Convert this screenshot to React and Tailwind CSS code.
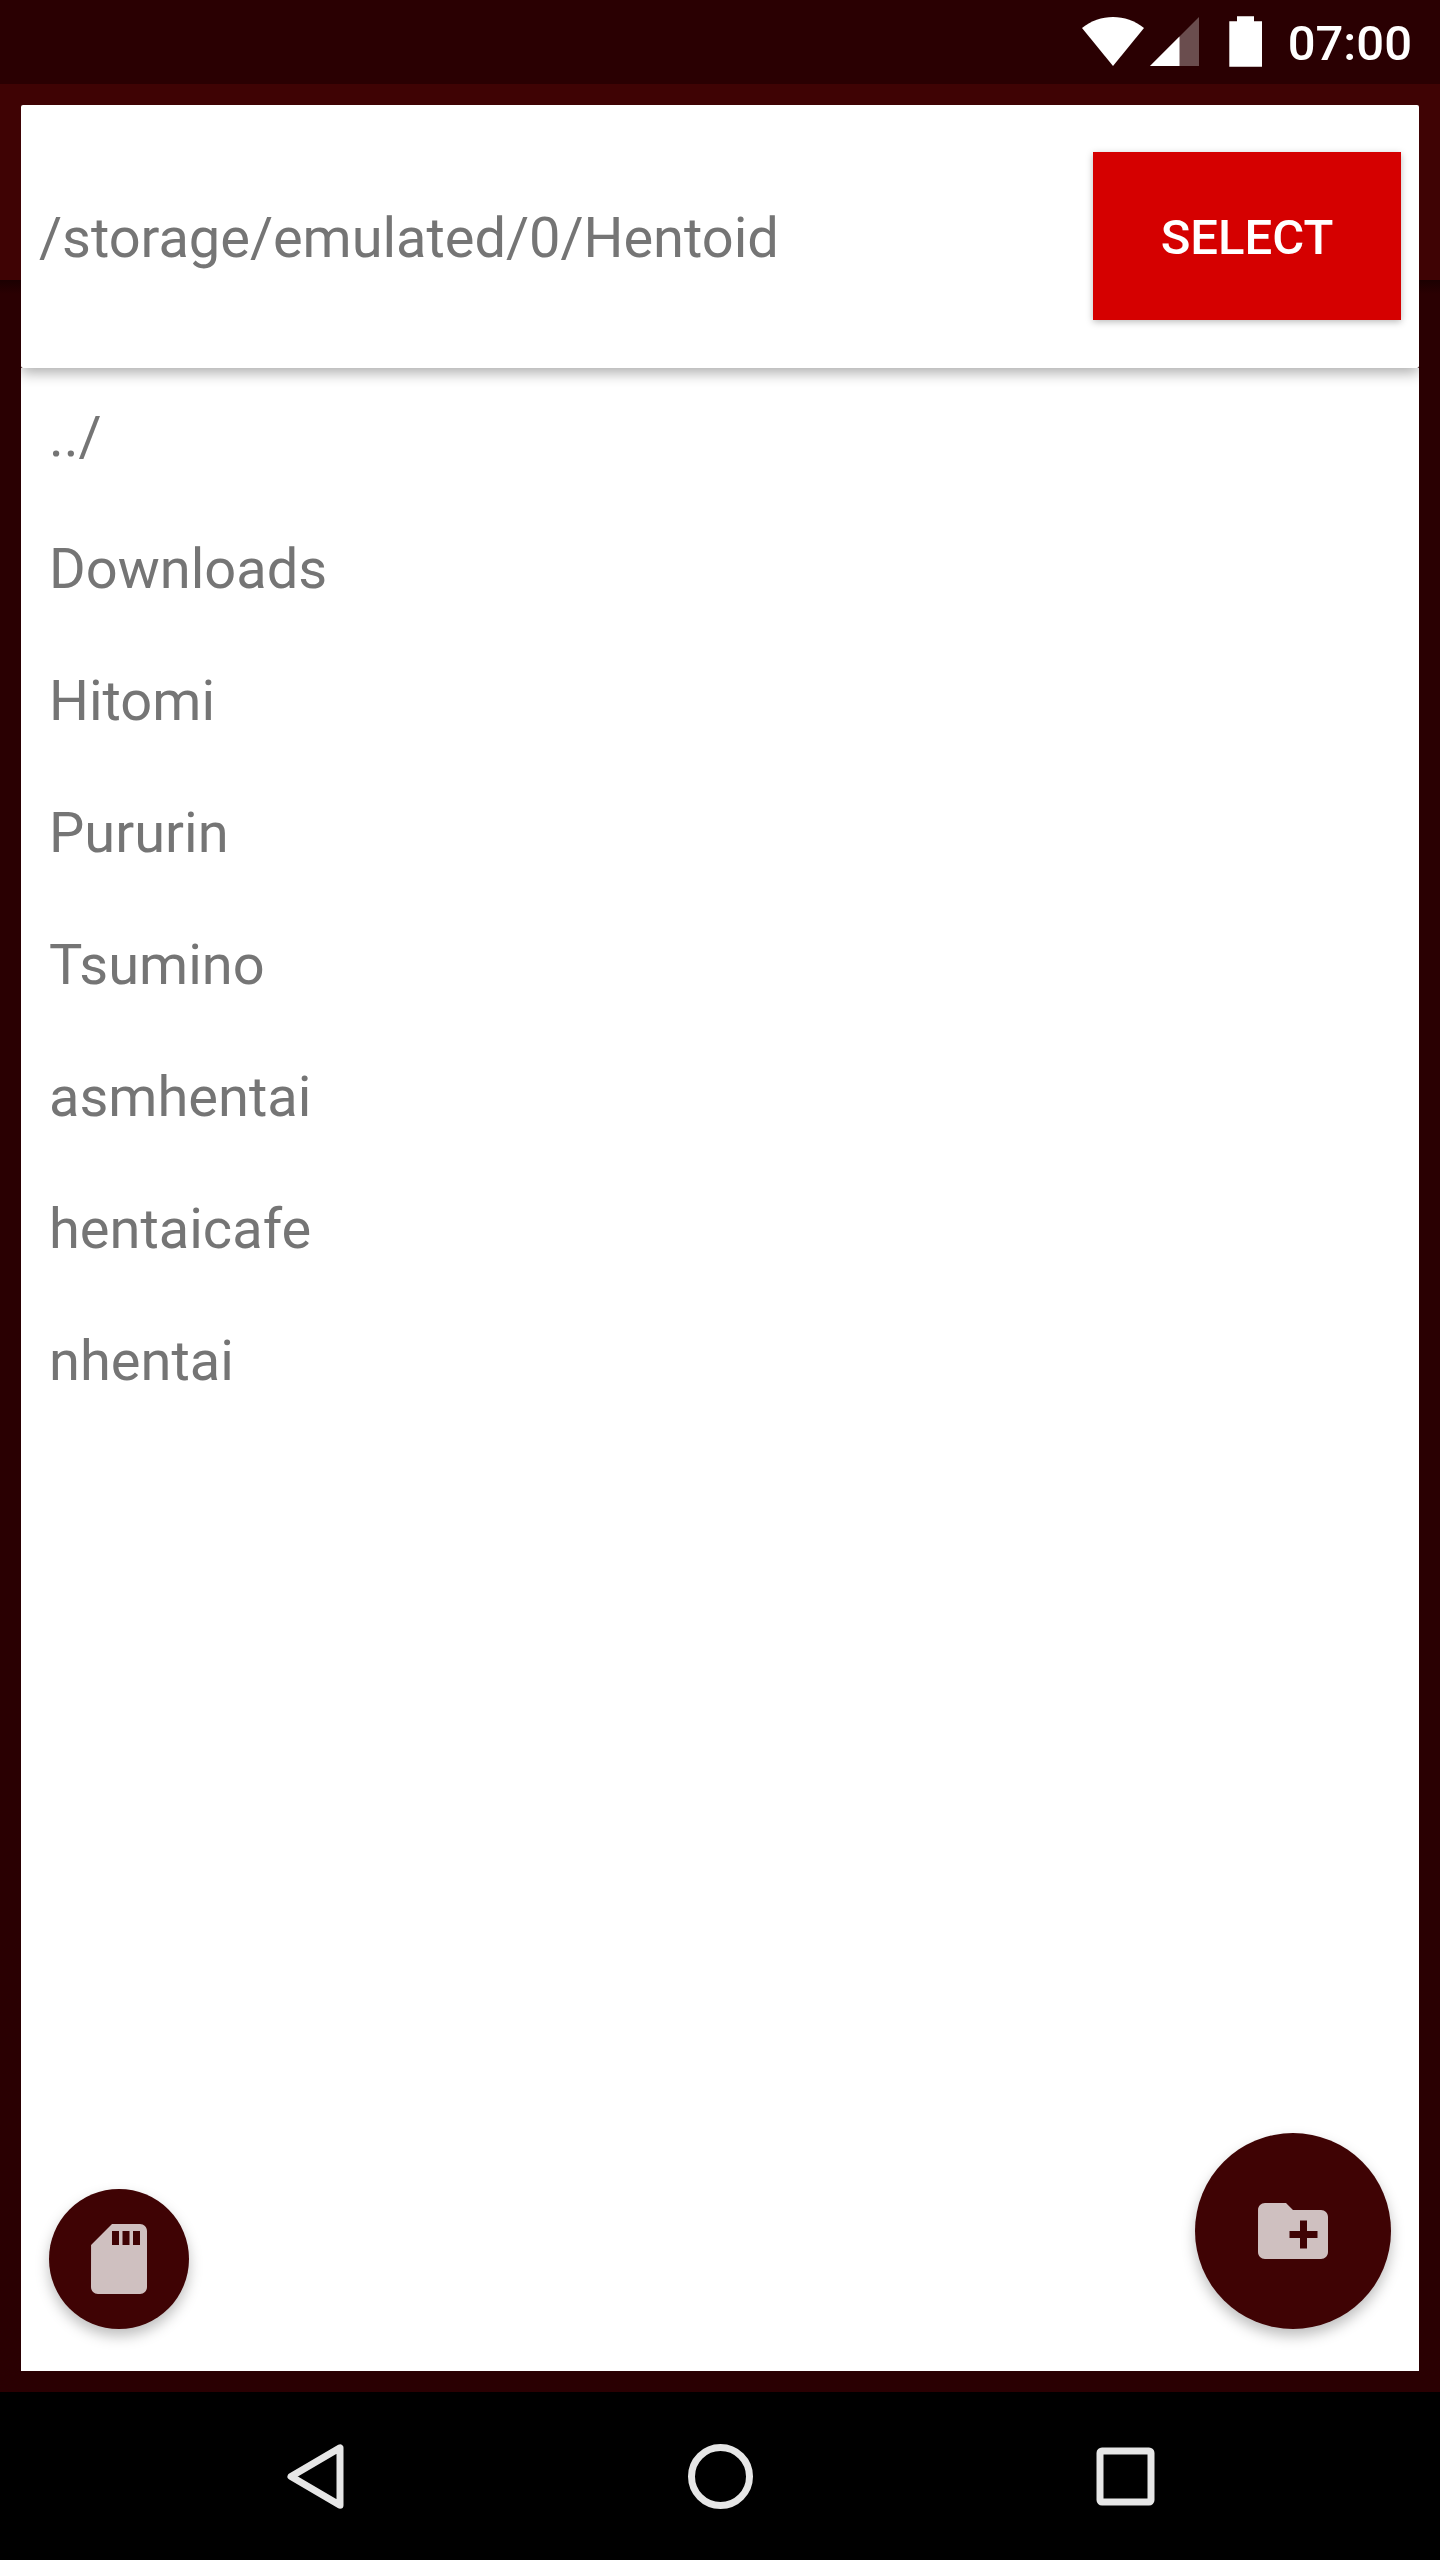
const folders = ["../", "Downloads", "Hitomi", "Pururin", "Tsumino", "asmhentai", "hentaicafe", "nhentai"];

function StatusBar() {
  return (
    <header className="flex h-[84px] shrink-0 items-start justify-end bg-[#2a0002] text-white">
      <svg className="mt-4 h-[52px] w-[182px] shrink-0" viewBox="0 0 182 52" fill="currentColor">
        <path d="M0 12C18 -2.800 44 -2.800 62 12L31 50Z" />
        <path d="M68 50L117 1V50Z" opacity="0.3" />
        <path d="M68 50L97.500 20.500V50Z" />
        <path d="M155 0.200H172V5.200H180V50.700H147.300V5.200H155Z" />
      </svg>
      <span className="mt-[15px] w-[176px] pr-[28px] text-right text-[49px] leading-[58px] font-medium">07:00</span>
    </header>
  );
}

function PathBar() {
  return (
    <div className="relative z-10 flex h-[263px] shrink-0 items-center justify-between rounded-[2px] bg-white px-[18px] pb-px shadow-[0_5px_14px_rgba(0,0,0,0.32)] [clip-path:inset(0_0_-30px_0)]">
      <span className="mt-1 text-[56px] leading-[66px] tracking-[-0.04px]">/storage/emulated/0/Hentoid</span>
      <button className="h-[168px] w-[308px] bg-[#d50000] pt-1 text-[49px] font-medium text-white shadow-[0_2px_7px_rgba(0,0,0,0.27)]">
        SELECT
      </button>
    </div>
  );
}

export default function App() {
  return (
    <div className="flex h-[2560px] w-[1440px] flex-col overflow-hidden bg-[#2a0002] font-['Roboto',sans-serif] text-[#757575]">
      <StatusBar />
      <div className="flex grow flex-col bg-[linear-gradient(#3f0304_0_196px,#1c0001_196px,#2a0002_210px)] p-[21px]">
        <PathBar />
        <main className="flex grow flex-col bg-white">
          <ul className="grow pt-[3px] pl-7">
            {folders.map((name) => (
              <li key={name} className="flex h-[132px] items-center text-[56px] leading-[66px]">
                {name}
              </li>
            ))}
          </ul>
          <div className="flex items-end justify-between px-7 pb-[42px]">
            <button className="flex size-[140px] items-center justify-center rounded-full bg-[#3f0304] shadow-[0_7px_14px_rgba(0,0,0,0.26)]">
              <svg className="size-[84px]" viewBox="0 0 24 24" fill="#cfc0c0">
                <path d="M18 2h-8L4.020 8 4 20c0 1.100.9 2 2 2h12c1.100 0 2-.9 2-2V4c0-1.100-.9-2-2-2zm-6 6h-2V4h2v4zm3 0h-2V4h2v4zm3 0h-2V4h2v4z" />
              </svg>
            </button>
            <button className="flex size-[196px] items-center justify-center rounded-full bg-[#3f0304] shadow-[0_7px_14px_rgba(0,0,0,0.26)]">
              <svg className="size-[84px]" viewBox="0 0 24 24" fill="#cfc0c0">
                <path d="M20 6h-8l-2-2H4c-1.110 0-1.990.89-1.990 2L2 18c0 1.110.89 2 2 2h16c1.110 0 2-.89 2-2V8c0-1.110-.89-2-2-2zm-1 8h-3v3h-2v-3h-3v-2h3V9h2v3h3v2z" />
              </svg>
            </button>
          </div>
        </main>
      </div>
      <nav className="flex h-[168px] shrink-0 items-center justify-center gap-[305px] bg-black">
        <svg className="size-[100px]" viewBox="0 0 100 100" fill="none" stroke="#e6e6e6" strokeWidth="7" strokeLinejoin="round">
          <path d="M75 21.800V79.200L26 50.500Z" />
        </svg>
        <svg className="size-[100px]" viewBox="0 0 100 100" fill="none" stroke="#e6e6e6" strokeWidth="7">
          <circle cx="50.500" cy="50.500" r="29" />
        </svg>
        <svg className="size-[100px]" viewBox="0 0 100 100" fill="none" stroke="#e6e6e6" strokeWidth="7">
          <rect x="25" y="25" width="51" height="51" rx="2" />
        </svg>
      </nav>
    </div>
  );
}
